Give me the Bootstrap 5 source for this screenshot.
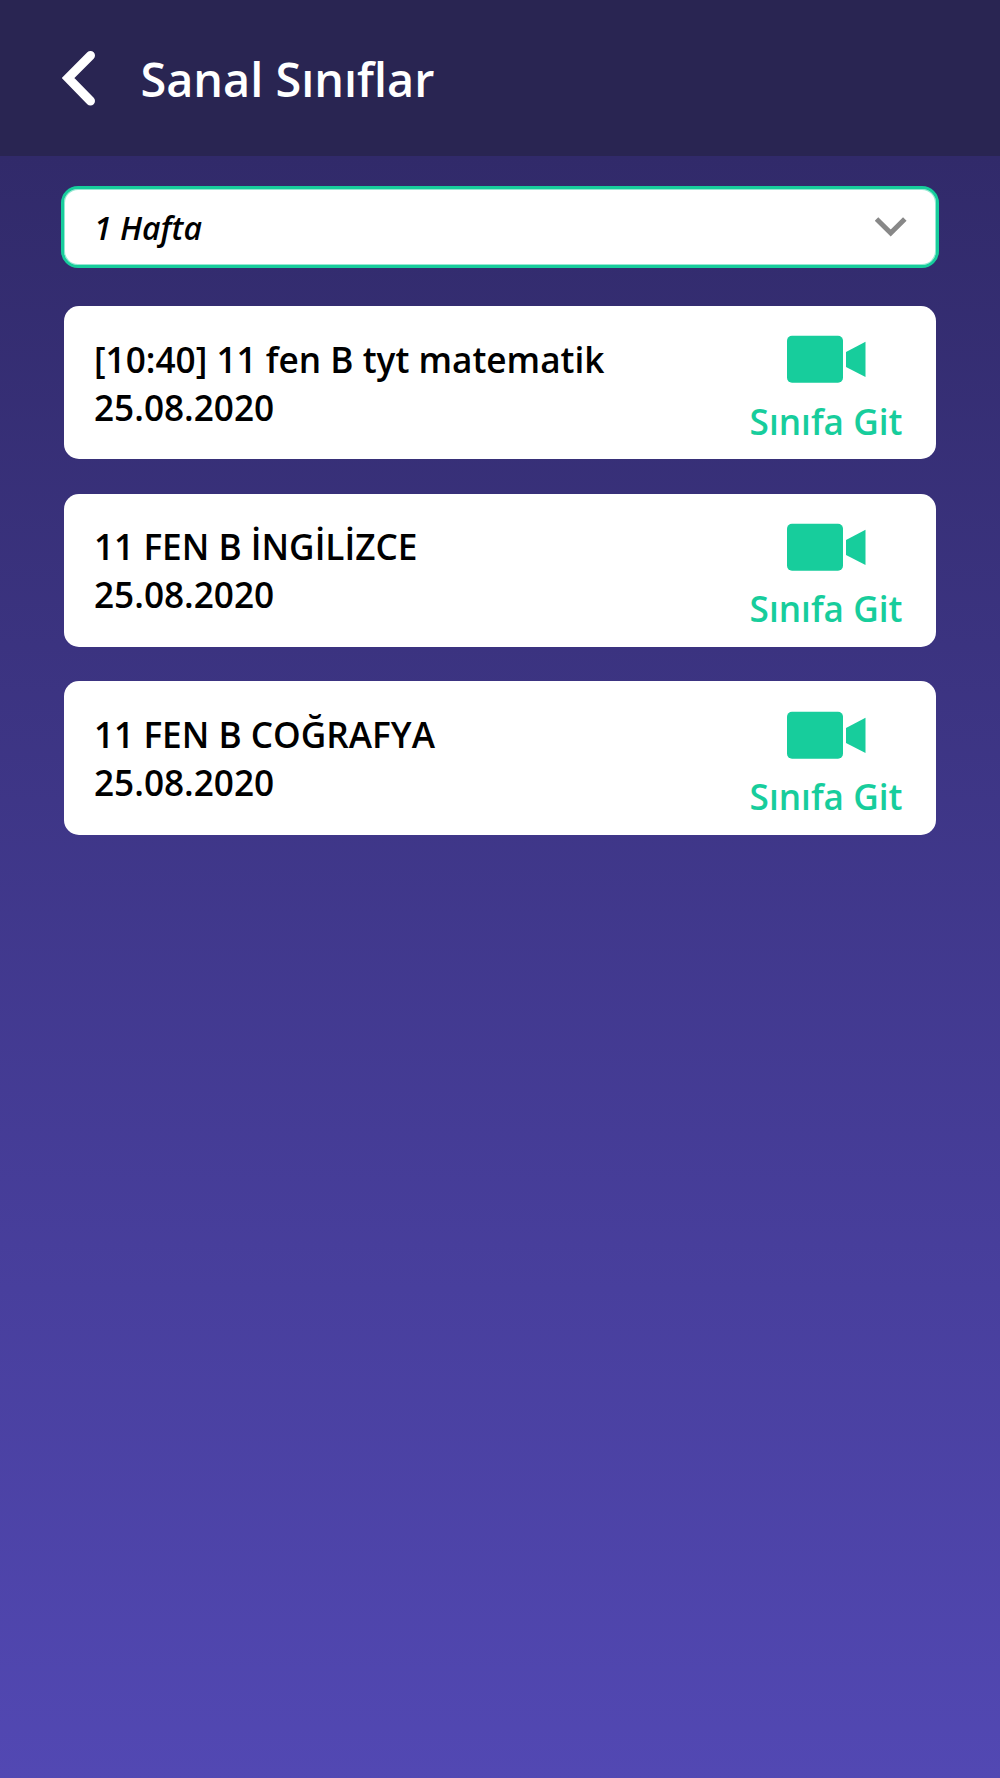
<!DOCTYPE html>
<html lang="tr">
<head>
<meta charset="utf-8">
<meta name="viewport" content="width=device-width, initial-scale=1">
<title>Sanal Sınıflar</title>
<link href="https://cdn.jsdelivr.net/npm/bootstrap@5.3.0/dist/css/bootstrap.min.css" rel="stylesheet">
<style>
body{font-family:"Open Sans","Noto Sans",sans-serif;font-weight:600;background:linear-gradient(180deg,#312a6a 0,#312a6a 156px,#5248b3 1778px) no-repeat;color:#000}
.topbar{height:156px;background:#292552;padding:0 62px 0 62px;color:#fff}
.topbar h1{font-size:46.8px;line-height:64px;font-weight:600;margin-left:44.5px;padding-top:1px}
.page-body{padding:29.6px 61px 0}
.week-select{height:82px;border:3px solid #17cd9c;box-shadow:inset 0 0 0 1px rgba(23,205,156,.45);border-radius:17px;padding:0 29px 0 30px;background:#fff;color:#000;font-size:32px;font-style:italic;font-weight:600}
.week-select span{padding-top:2px}
.lesson-list{margin:38.4px 3px 0;gap:34.2px}
.lesson{height:153.4px;border:0;border-radius:15px;padding:0 31px 0 30px;font-size:35.2px;line-height:48px;color:#000}
.join-link{color:#17cd9c;padding-top:29.4px;width:156px}
.join-link svg{margin-right:2px}
.join-label{margin-top:13.4px;margin-right:2px}
</style>
</head>
<body class="min-vh-100">
<header class="topbar d-flex align-items-center">
<svg width="34" height="56" viewBox="0 0 34 56" fill="none" stroke="#fff" stroke-width="9" stroke-linecap="round"><path d="M28.5 5.5 6 28 28.5 51" stroke-linejoin="miter"/></svg>
<h1 class="mb-0">Sanal Sınıflar</h1>
</header>
<main class="page-body">
<button type="button" class="week-select w-100 d-flex align-items-center justify-content-between">
<span>1 Hafta</span>
<svg width="32" height="20" viewBox="0 0 32 20" fill="none" stroke="#888" stroke-width="5"><path d="M1.5 1.9 15.7 16 29.8 1.9"/></svg>
</button>
<div class="lesson-list d-flex flex-column">
<div class="card lesson flex-row justify-content-between">
<div class="align-self-center">[10:40] 11 fen B tyt matematik<br>25.08.2020</div>
<a class="join-link d-flex flex-column align-items-center text-decoration-none" href="#"><svg width="79" height="48" viewBox="0 0 79 48" fill="currentColor"><rect x="0" y=".7" width="56" height="47" rx="5"/><path d="M59 17 78.5 6.8v35.2L59 32z"/></svg><span class="join-label text-nowrap">Sınıfa Git</span></a>
</div>
<div class="card lesson flex-row justify-content-between">
<div class="align-self-center">11 FEN B İNGİLİZCE<br>25.08.2020</div>
<a class="join-link d-flex flex-column align-items-center text-decoration-none" href="#"><svg width="79" height="48" viewBox="0 0 79 48" fill="currentColor"><rect x="0" y=".7" width="56" height="47" rx="5"/><path d="M59 17 78.5 6.8v35.2L59 32z"/></svg><span class="join-label text-nowrap">Sınıfa Git</span></a>
</div>
<div class="card lesson flex-row justify-content-between">
<div class="align-self-center">11 FEN B COĞRAFYA<br>25.08.2020</div>
<a class="join-link d-flex flex-column align-items-center text-decoration-none" href="#"><svg width="79" height="48" viewBox="0 0 79 48" fill="currentColor"><rect x="0" y=".7" width="56" height="47" rx="5"/><path d="M59 17 78.5 6.8v35.2L59 32z"/></svg><span class="join-label text-nowrap">Sınıfa Git</span></a>
</div>
</div>
</main>
<script src="https://cdn.jsdelivr.net/npm/bootstrap@5.3.0/dist/js/bootstrap.bundle.min.js"></script>
</body>
</html>
